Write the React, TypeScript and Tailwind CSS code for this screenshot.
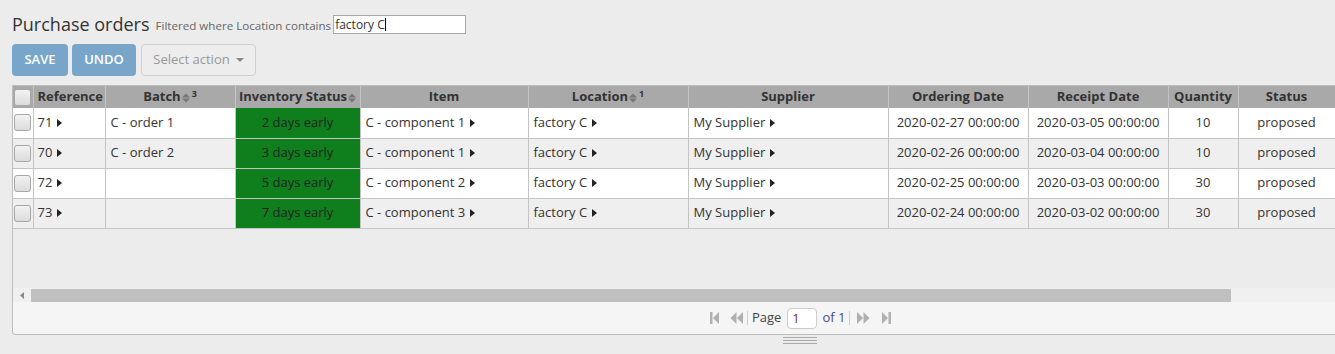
import React from 'react';

type Row = {
  ref: string;
  batch: string;
  status: string;
  item: string;
  location: string;
  supplier: string;
  ordering: string;
  receipt: string;
  qty: string;
  state: string;
};

const rows: Row[] = [
  { ref: '71', batch: 'C - order 1', status: '2 days early', item: 'C - component 1', location: 'factory C', supplier: 'My Supplier', ordering: '2020-02-27 00:00:00', receipt: '2020-03-05 00:00:00', qty: '10', state: 'proposed' },
  { ref: '70', batch: 'C - order 2', status: '3 days early', item: 'C - component 1', location: 'factory C', supplier: 'My Supplier', ordering: '2020-02-26 00:00:00', receipt: '2020-03-04 00:00:00', qty: '10', state: 'proposed' },
  { ref: '72', batch: '', status: '5 days early', item: 'C - component 2', location: 'factory C', supplier: 'My Supplier', ordering: '2020-02-25 00:00:00', receipt: '2020-03-03 00:00:00', qty: '30', state: 'proposed' },
  { ref: '73', batch: '', status: '7 days early', item: 'C - component 3', location: 'factory C', supplier: 'My Supplier', ordering: '2020-02-24 00:00:00', receipt: '2020-03-02 00:00:00', qty: '30', state: 'proposed' },
];

// column widths as seen in the grid
const colWidths = ['w-[20px]', 'w-[72px]', 'w-[130px]', 'w-[125px]', 'w-[168px]', 'w-[160px]', 'w-[200px]', 'w-[140px]', 'w-[140px]', 'w-[70px]', 'w-[145px]'];

const Caret = () => (
  <svg width="5" height="8" viewBox="0 0 5 8" className="ml-[5px] inline-block align-[0px]">
    <path d="M0 0 L5 4 L0 8 Z" fill="#222" />
  </svg>
);

const SortIcon = () => (
  <svg width="8" height="10" viewBox="0 0 8 10" className="ml-[1px] inline-block">
    <path d="M0 4.5 L4 0.5 L8 4.5 Z" fill="#777" />
    <path d="M0 5.5 L8 5.5 L4 9.5 Z" fill="#777" />
  </svg>
);

const Checkbox = () => (
  <div className="w-[17px] h-[17px] rounded-[3px] border border-[#a8a8a8] bg-gradient-to-b from-[#f2f2f2] to-[#dcdcdc]" />
);

const Header = ({ children, left }: { children: React.ReactNode; left?: boolean }) => (
  <th className={`h-[22px] border-r border-[#c4c4c4] px-0 ${left ? 'text-left pl-[4px]' : 'text-center'} font-bold text-[13px] text-[#333] whitespace-nowrap overflow-hidden`}>
    {children}
  </th>
);

const PagerIcon = ({ d, w }: { d: string; w: number }) => (
  <svg width={w} height="12" viewBox={`0 0 ${w} 12`}>
    <path d={d} fill="#b0b0b0" />
  </svg>
);

export default function App() {
  return (
    <div className="w-[1335px] h-[354px] bg-[#ececec] overflow-hidden text-[#333]" style={{ fontFamily: '"Open Sans", "Noto Sans", sans-serif' }}>
      <div className="pl-3 pt-[13px] flex items-end">
        <span className="text-[18px] leading-[22px] text-[#333]">Purchase orders</span>
        <span className="ml-[6px] text-[11.6px] leading-[16px] text-[#666] mb-[1px]">Filtered where Location contains</span>
        <div className="ml-[2px] w-[133px] h-[19px] border border-[#a9a9a9] bg-white text-[12px] leading-[17px] px-[1px] text-[#333] mb-[1px]">
          factory C<span className="inline-block w-px h-[13px] bg-black align-[-2px]" />
        </div>
      </div>

      <div className="pl-3 pt-[9px] flex gap-1">
        <button className="w-[56px] h-[32px] rounded-[4px] bg-[#77a6ca] text-white text-[13px] font-semibold">SAVE</button>
        <button className="w-[64px] h-[32px] rounded-[4px] bg-[#77a6ca] text-white text-[13px] font-semibold">UNDO</button>
        <button className="ml-[1px] w-[115px] h-[32px] rounded-[4px] border border-[#d0d0d0] bg-[#ededed] text-[#999] text-[13px] flex items-center justify-center gap-[6px]">
          Select action
          <svg width="8" height="4" viewBox="0 0 8 4">
            <path d="M0 0 L8 0 L4 4 Z" fill="#888" />
          </svg>
        </button>
      </div>

      <div className="ml-3 mt-[9px] border-l border-t border-b border-[#bdbdbd] rounded-bl-[4px] overflow-hidden">
        <div className="h-[202px] bg-[#ececec] overflow-hidden">
          <table className="table-fixed border-collapse text-[13px] w-[1370px]">
            <colgroup>
              {colWidths.map((w, i) => (
                <col key={i} className={w} />
              ))}
            </colgroup>
            <thead>
              <tr className="bg-[#a9a9a9]">
                <th className="h-[22px] border-r border-[#c4c4c4] px-[1px]">
                  <Checkbox />
                </th>
                <Header left>Reference</Header>
                <Header>
                  Batch<SortIcon /><sup className="text-[9px] ml-[2px]">3</sup>
                </Header>
                <Header>
                  Inventory Status<SortIcon />
                </Header>
                <Header>Item</Header>
                <Header>
                  Location<SortIcon /><sup className="text-[9px] ml-[2px]">1</sup>
                </Header>
                <Header>Supplier</Header>
                <Header>Ordering Date</Header>
                <Header>Receipt Date</Header>
                <Header>Quantity</Header>
                <th className="h-[22px] border-r border-[#c4c4c4] px-0 pr-[48px] text-center font-bold text-[13px] text-[#333] whitespace-nowrap">Status</th>
              </tr>
            </thead>
            <tbody>
              {rows.map((r, i) => (
                <tr key={r.ref} className={i % 2 === 0 ? 'bg-white' : 'bg-[#efefef]'}>
                  <td className="h-[30px] border-r border-b border-[#c4c4c4] px-[1px]">
                    <Checkbox />
                  </td>
                  <td className="border-r border-b border-[#c4c4c4] pl-[4px] whitespace-nowrap">
                    {r.ref}
                    <Caret />
                  </td>
                  <td className="border-r border-b border-[#c4c4c4] pl-[5px] whitespace-nowrap">{r.batch}</td>
                  <td className="border-r border-b border-[#c4c4c4] bg-[#0f7e1d] text-center text-[#222] whitespace-nowrap">{r.status}</td>
                  <td className="border-r border-b border-[#c4c4c4] pl-[5px] whitespace-nowrap">
                    {r.item}
                    <Caret />
                  </td>
                  <td className="border-r border-b border-[#c4c4c4] pl-[5px] whitespace-nowrap">
                    {r.location}
                    <Caret />
                  </td>
                  <td className="border-r border-b border-[#c4c4c4] pl-[5px] whitespace-nowrap">
                    {r.supplier}
                    <Caret />
                  </td>
                  <td className="border-r border-b border-[#c4c4c4] text-center whitespace-nowrap">{r.ordering}</td>
                  <td className="border-r border-b border-[#c4c4c4] text-center whitespace-nowrap">{r.receipt}</td>
                  <td className="border-r border-b border-[#c4c4c4] text-center whitespace-nowrap">{r.qty}</td>
                  <td className="border-r border-b border-[#c4c4c4] pr-[48px] text-center whitespace-nowrap">{r.state}</td>
                </tr>
              ))}
            </tbody>
          </table>
        </div>

        <div className="h-[14px] bg-[#f0f0f0] flex items-center">
          <div className="w-[18px] flex justify-center">
            <svg width="4" height="7" viewBox="0 0 4 7">
              <path d="M4 0 L0 3.5 L4 7 Z" fill="#8a8a8a" />
            </svg>
          </div>
          <div className="w-[1200px] h-[13px] bg-[#c0c0c0]" />
        </div>

        <div className="h-[32px] bg-[#f5f5f5] flex items-center pl-[697px] text-[13px]">
          <div className="flex items-center gap-[11px]">
            <PagerIcon w={9} d="M0 0 H2.5 V12 H0 Z M9 0 V12 L3 6 Z" />
            <PagerIcon w={13} d="M6.5 0 V12 L0.5 6 Z M13 0 V12 L7 6 Z" />
          </div>
          <div className="ml-[4px] mr-[4px] w-px h-[14px] bg-[#d0d0d0]" />
          <span className="text-[#444]">Page</span>
          <div className="ml-[6px] w-[30px] h-[21px] rounded-[4px] border border-[#cccccc] bg-white text-[12px] leading-[19px] pl-[4px] text-[#6a2a3a]">1</div>
          <span className="ml-[5px] text-[#4a4a8a]">of 1</span>
          <div className="ml-[4px] mr-[7px] w-px h-[14px] bg-[#d0d0d0]" />
          <div className="flex items-center gap-[12px]">
            <PagerIcon w={13} d="M0 0 V12 L6 6 Z M6.5 0 V12 L12.5 6 Z" />
            <PagerIcon w={9} d="M0 0 V12 L6 6 Z M6.5 0 H9 V12 H6.5 Z" />
          </div>
        </div>
      </div>

      <div className="flex flex-col gap-[2px] mt-[2px] ml-[783px] w-[34px]">
        <div className="w-[34px] h-px bg-[#a8a8a8]" />
        <div className="w-[34px] h-px bg-[#a8a8a8]" />
        <div className="w-[34px] h-px bg-[#a8a8a8]" />
      </div>
    </div>
  );
}
